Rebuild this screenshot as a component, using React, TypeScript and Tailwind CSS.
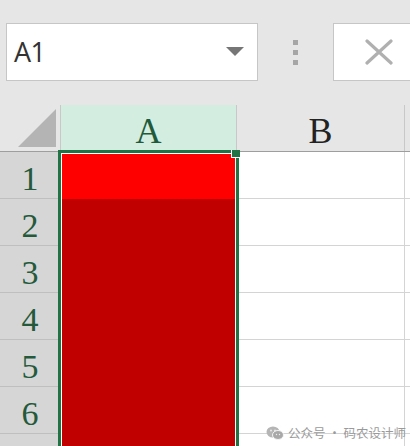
import React from 'react';

const rows = [1, 2, 3, 4, 5, 6, 7];

function WeChatIcon() {
  return (
    <svg width="18" height="14" viewBox="0 0 18 14" className="shrink-0">
      <ellipse cx="7" cy="6" rx="6.5" ry="5.5" fill="#b5b5b5" />
      <ellipse cx="12" cy="9" rx="5.5" ry="4.5" fill="#a8a8a8" stroke="#f4f4f4" strokeWidth="1" />
      <circle cx="5" cy="4.5" r="0.9" fill="#eee" />
      <circle cx="9" cy="4.5" r="0.9" fill="#eee" />
      <circle cx="10.5" cy="8.5" r="0.7" fill="#eee" />
      <circle cx="13.5" cy="8.5" r="0.7" fill="#eee" />
    </svg>
  );
}

export default function App() {
  return (
    <div className="relative w-[410px] h-[446px] overflow-hidden bg-white" style={{ fontFamily: '"Liberation Serif", serif' }}>
      {/* formula bar */}
      <div className="h-[105px] bg-[#e6e6e6] flex items-start pt-[23px]">
        <div className="ml-[6px] w-[252px] h-[58px] bg-white border border-[#c6c6c6] flex items-center justify-between pl-[7px] pr-[13px]">
          <span className="text-[27px] text-[#333] tracking-tight" style={{ fontFamily: '"Open Sans", "Liberation Sans", sans-serif' }}>A1</span>
          <svg width="18" height="10" viewBox="0 0 18 10">
            <path d="M0 0H18L9 9Z" fill="#767676" />
          </svg>
        </div>
        <div className="w-[75px] h-[58px] flex flex-col items-center justify-center gap-[5px]">
          <span className="w-[5px] h-[5px] bg-[#a6a6a6]" />
          <span className="w-[5px] h-[5px] bg-[#a6a6a6]" />
          <span className="w-[5px] h-[5px] bg-[#a6a6a6]" />
        </div>
        <div className="flex-1 h-[58px] bg-white border border-[#c6c6c6] border-r-0 flex items-center pl-[30px]">
          <svg width="30" height="26" viewBox="0 0 30 26">
            <path d="M3 2L27 24M27 2L3 24" stroke="#b0b0b0" strokeWidth="3.2" strokeLinecap="round" />
          </svg>
        </div>
      </div>

      {/* column headers */}
      <div className="flex h-[47px] bg-[#e6e6e6] border-b border-[#9e9e9e]">
        <div className="w-[61px] shrink-0 border-r border-[#c8c8c8] flex items-end justify-end pb-[4px] pr-[2px]">
          <svg width="40" height="40" viewBox="0 0 40 40">
            <path d="M38 2V40H0Z" fill="#b4b4b4" />
          </svg>
        </div>
        <div className="w-[176px] shrink-0 bg-[#d3ede0] border-r border-[#c8c8c8] flex items-center justify-center text-[36px] text-[#215a3a] leading-none pt-[6px]">
          A
        </div>
        <div className="w-[168px] shrink-0 border-r border-[#c8c8c8] flex items-center justify-center text-[36px] text-[#222] leading-none pt-[6px]">
          B
        </div>
        <div className="flex-1" />
      </div>

      {/* rows */}
      {rows.map(r => (
        <div key={r} className="flex h-[47px]">
          <div className="w-[61px] shrink-0 bg-[#d6d6d6] border-r border-b border-[#bfbfbf] flex items-center justify-center text-[34px] text-[#245a3b] leading-none pt-[8px]">
            {r < 7 ? r : ''}
          </div>
          <div className={`w-[176px] shrink-0 ${r === 1 ? 'bg-[#ff0000]' : 'bg-[#c00000]'}`} />
          <div className="w-[168px] shrink-0 border-r border-b border-[#d4d4d4]" />
          <div className="flex-1 border-b border-[#d4d4d4]" />
        </div>
      ))}

      {/* selection */}
      <div className="absolute left-[58px] top-[150px] w-[181px] h-[320px] border-[3px] border-[#217346]">
        <div className="w-full h-full border border-white" />
      </div>
      <div className="absolute left-[231px] top-[150px] w-[9px] h-[8px] bg-[#217346] border-l border-b border-white" />

      {/* watermark */}
      <div className="absolute left-[266px] top-[424px] flex items-center gap-[4px] text-[12.5px] text-[#9a9a9a]" style={{ fontFamily: '"Noto Sans CJK SC", sans-serif' }}>
        <WeChatIcon />
        <span>公众号 · 码农设计师</span>
      </div>
    </div>
  );
}
